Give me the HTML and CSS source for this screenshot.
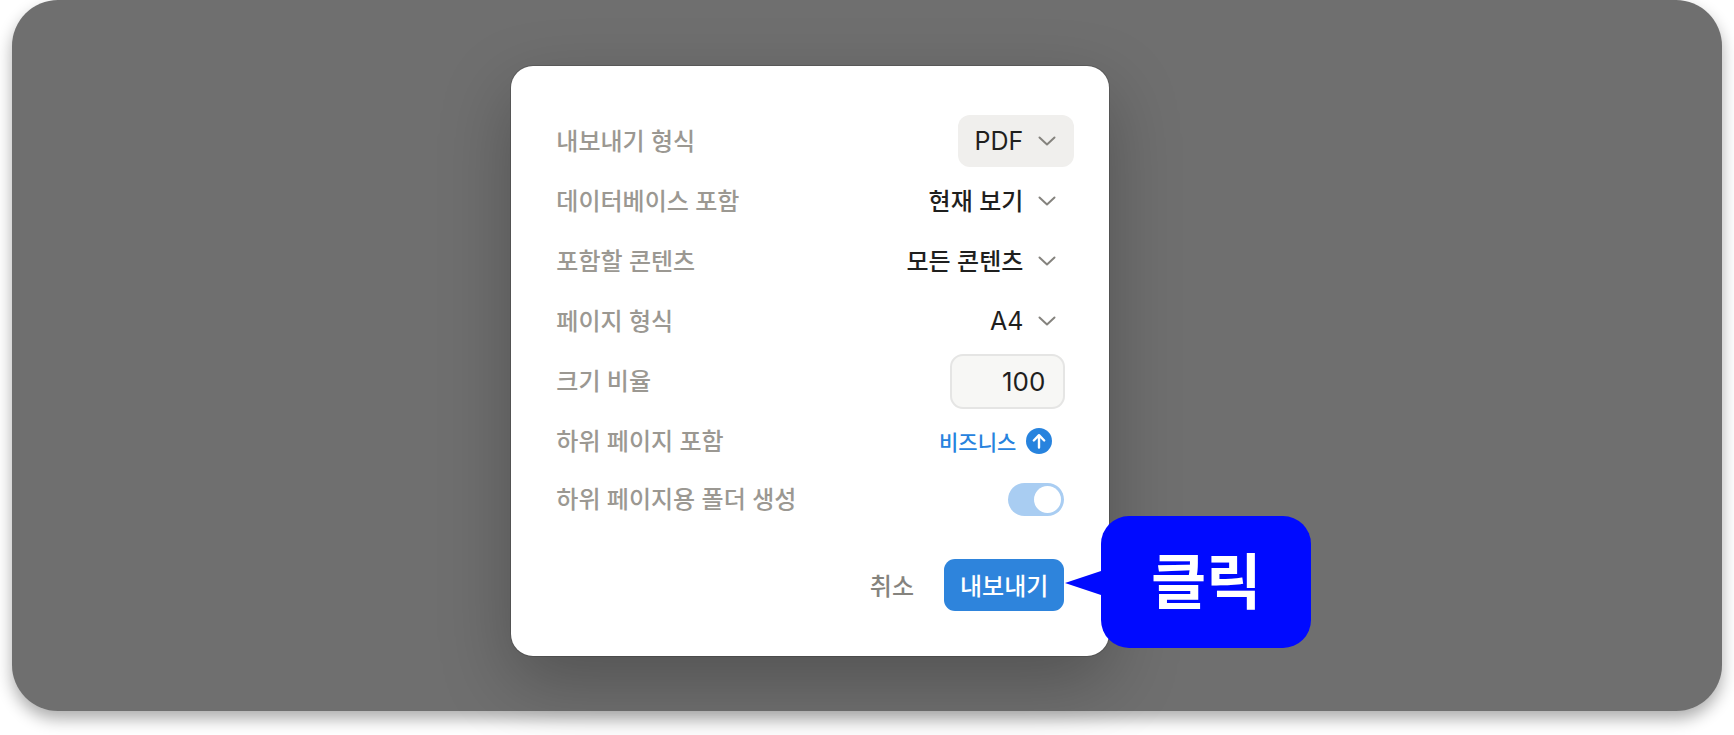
FILE: index.html
```html
<!DOCTYPE html>
<html lang="ko">
<head>
    <meta charset="UTF-8">
    <meta name="viewport" content="width=device-width, initial-scale=1.0">
    <title>내보내기</title>
    <link rel="stylesheet" href="styles.css">
</head>
<body>
    <main class="stage">
        <form class="dialog">
            <div class="row">
                <label class="name" for="format">내보내기 형식</label>
                <div class="picker">
                    <select id="format" class="latin active">
                        <option>PDF</option>
                    </select>
                    <svg class="chevron" viewBox="0 0 18 10"><path d="M1.5 1.5 9 8.5l7.5-7"/></svg>
                </div>
            </div>
            <div class="row">
                <label class="name" for="database">데이터베이스 포함</label>
                <div class="picker">
                    <select id="database">
                        <option>현재 보기</option>
                    </select>
                    <svg class="chevron" viewBox="0 0 18 10"><path d="M1.5 1.5 9 8.5l7.5-7"/></svg>
                </div>
            </div>
            <div class="row">
                <label class="name" for="content">포함할 콘텐츠</label>
                <div class="picker">
                    <select id="content">
                        <option>모든 콘텐츠</option>
                    </select>
                    <svg class="chevron" viewBox="0 0 18 10"><path d="M1.5 1.5 9 8.5l7.5-7"/></svg>
                </div>
            </div>
            <div class="row">
                <label class="name" for="paper">페이지 형식</label>
                <div class="picker">
                    <select id="paper" class="latin">
                        <option>A4</option>
                    </select>
                    <svg class="chevron" viewBox="0 0 18 10"><path d="M1.5 1.5 9 8.5l7.5-7"/></svg>
                </div>
            </div>
            <div class="row">
                <label class="name" for="scale">크기 비율</label>
                <input id="scale" class="scale" type="text" inputmode="numeric" value="100">
            </div>
            <div class="row">
                <span class="name">하위 페이지 포함</span>
                <a class="upgrade" href="#">비즈니스
                    <svg viewBox="0 0 26 26">
                        <circle cx="13" cy="13" r="13"/>
                        <path d="M13 19.500V7.500M7.800 12.500 13 7.200l5.200 5.300"/>
                    </svg>
                </a>
            </div>
            <div class="row row-last">
                <label class="name" for="folders">하위 페이지용 폴더 생성</label>
                <input id="folders" class="toggle" type="checkbox" checked>
            </div>
            <div class="actions">
                <button class="cancel" type="button">취소</button>
                <div class="export">
                    <button class="primary" type="button">내보내기</button>
                    <div class="callout">클릭</div>
                </div>
            </div>
        </form>
    </main>
</body>
</html>
```
FILE: styles.css
```css
* {
    box-sizing: border-box;
}
body {
    margin: 0;
    background: #fff;
    font-family: Inter, 'Noto Sans CJK KR', sans-serif;
    font-size: 24px;
    color: #1f1f1e;
}
select,
input,
button {
    font: inherit;
}
.stage {
    display: flow-root;
    min-height: calc(100vh - 24px);
    margin: 0 12px 24px;
    padding-bottom: 55px;
    border-radius: 46px;
    background: #6f6f6f;
    box-shadow: 0 8px 16px rgba(0, 0, 0, 0.32);
}
.dialog {
    width: 598px;
    max-width: 100%;
    margin: 66px 0 0 29.2%;
    padding: 45px 35px 45px 45px;
    border-radius: 22px;
    background: #fff;
    box-shadow: 0 0 0 1px rgba(0, 0, 0, 0.15), 0 26px 70px rgba(0, 0, 0, 0.26);
}
.row {
    display: flex;
    align-items: center;
    justify-content: space-between;
    height: 60px;
    color: #9b9892;
    font-weight: 500;
}
.row-last {
    height: 56px;
}
.name {
    padding-bottom: 3px;
}

/* selects */
.picker {
    position: relative;
}
select {
    display: block;
    appearance: none;
    height: 52px;
    padding: 0 51px 0 16px;
    border: 0;
    border-radius: 12px;
    background: transparent;
    color: #1f1f1e;
    text-align-last: right;
}
select.latin {
    font-size: 25px;
    font-weight: 400;
}
select.active {
    background: #f0efed;
}
.chevron {
    position: absolute;
    top: 21px;
    right: 18px;
    width: 18px;
    height: 10px;
    fill: none;
    stroke: #85837e;
    stroke-width: 2;
    stroke-linecap: round;
    stroke-linejoin: round;
    pointer-events: none;
}

.scale {
    width: 115px;
    height: 55px;
    margin-right: 9px;
    padding: 0 18px;
    border: 2px solid #e5e5e4;
    border-radius: 13px;
    background: #f7f7f5;
    color: #1f1f1e;
    font-size: 26px;
    font-weight: 400;
    text-align: right;
}
.upgrade {
    display: flex;
    align-items: center;
    gap: 10px;
    margin-right: 22px;
    color: #2783de;
    font-size: 21px;
    text-decoration: none;
}
.upgrade svg {
    width: 26px;
    height: 26px;
    fill: #2783de;
}
.upgrade path {
    fill: none;
    stroke: #fff;
    stroke-width: 2.400;
    stroke-linecap: round;
    stroke-linejoin: round;
}
.toggle {
    appearance: none;
    width: 56px;
    height: 33px;
    margin: 0 10px 0 0;
    padding: 3px;
    border-radius: 17px;
    background: #a9cdf2;
}
.toggle::before {
    content: "";
    display: block;
    width: 27px;
    height: 27px;
    border-radius: 50%;
    background: #fff;
}
.toggle:checked::before {
    margin-left: auto;
}

/* footer */
.actions {
    display: flex;
    justify-content: flex-end;
    gap: 14px;
    margin: 32px 10px 0 0;
}
button {
    height: 52px;
    padding: 0 16px 2px;
    border: 0;
    border-radius: 11px;
    background: none;
    font-weight: 500;
}
.cancel {
    color: #85837e;
}
.primary {
    display: block;
    background: #2e84dc;
    color: #fff;
}
.export {
    position: relative;
}
.callout {
    position: absolute;
    top: -43px;
    left: calc(100% + 37px);
    display: flex;
    align-items: center;
    justify-content: center;
    width: 210px;
    height: 132px;
    padding-bottom: 10px;
    border-radius: 28px;
    background: #000aff;
    color: #fff;
    font-size: 60px;
    font-weight: 700;
}
.callout::before {
    content: "";
    position: absolute;
    top: 55px;
    right: 100%;
    border: solid transparent;
    border-width: 12px 36px 12px 0;
    border-right-color: #000aff;
}
```
